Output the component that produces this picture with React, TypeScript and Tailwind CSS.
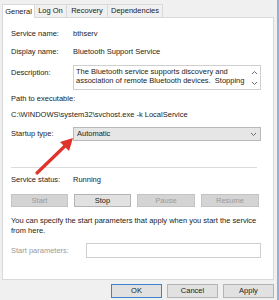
const tabs = ["General", "Log On", "Recovery", "Dependencies"];
const tabWidths = ["w-[33px]", "w-[33px]", "w-[42px]", "w-[56px]"];

const Chevron = ({ up }: { up?: boolean }) => (
  <svg width="7" height="5" viewBox="0 0 7 5" className="block">
    <path
      d={up ? "M1 4 L3.5 1.5 L6 4" : "M1 1 L3.5 3.5 L6 1"}
      fill="none"
      stroke="#6d6d6d"
      strokeWidth="1"
    />
  </svg>
);

const Button = ({
  label,
  disabled,
  primary,
  className = "",
}: {
  label: string;
  disabled?: boolean;
  primary?: boolean;
  className?: string;
}) => {
  const look = disabled
    ? "bg-[#d4d4d4] border-[#c4c4c4] text-[#9a9a9a]"
    : primary
      ? "bg-[#e1e1e1] border-[#3c84d0] text-[#1a1a1a]"
      : "bg-[#e1e1e1] border-[#b4b4b4] text-[#1a1a1a]";
  return (
    <div
      className={`flex items-center justify-center border ${look} ${className}`}
    >
      {label}
    </div>
  );
};

export default function App() {
  return (
    <div
      className="relative w-[279px] h-[300px] bg-[#f0f0f0] border-r-2 border-[#8db2dd] pl-[2px] pt-[4px] text-[7.5px] leading-[10px] text-[#1c1c1c] overflow-hidden"
      style={{ fontFamily: '"Liberation Sans", Arial, sans-serif' }}
    >
      {/* tab strip */}
      <div className="flex h-[13px] w-[271px]">
        {tabs.map((t, i) => (
          <div
            key={t}
            className={`${tabWidths[i]} flex items-center justify-center border border-b-0 ${
              i === 0
                ? "bg-white border-[#d9d9d9] relative z-10 h-[14px] -mt-[0px]"
                : "bg-[#f0f0f0] border-[#d9d9d9] -ml-px"
            }`}
          >
            {t}
          </div>
        ))}
      </div>

      {/* tab panel */}
      <div className="w-[272px] h-[263px] bg-white border border-[#d9d9d9] pl-[8px] flex flex-col">
        <div className="flex mt-[11px]">
          <div className="w-[62px]">Service name:</div>
          <div>bthserv</div>
        </div>
        <div className="flex mt-[8px]">
          <div className="w-[62px]">Display name:</div>
          <div>Bluetooth Support Service</div>
        </div>
        <div className="flex mt-[8px]">
          <div className="w-[62px] mt-[3px]">Description:</div>
          <div className="w-[188px] h-[25px] border border-[#cfcfcf] flex pl-[2px] pt-[1px]">
            <div className="flex-1 leading-[9px]">
              The Bluetooth service supports discovery and
              <br />
              association of remote Bluetooth devices.&nbsp; Stopping
            </div>
            <div className="w-[12px] flex flex-col items-center pt-[3px] gap-[6px]">
              <Chevron up />
              <Chevron />
            </div>
          </div>
        </div>
        <div className="mt-[4px]">Path to executable:</div>
        <div className="mt-[6px]">
          C:\WINDOWS\system32\svchost.exe -k LocalService
        </div>
        <div className="flex items-center mt-[7px]">
          <div className="w-[62px]">Startup type:</div>
          <div className="w-[188px] h-[14px] bg-[#e6e6e6] border border-[#b9b9b9] flex items-center pl-[3px] pr-[3px]">
            <div className="flex-1">Automatic</div>
            <Chevron />
          </div>
        </div>
        <div className="mt-[26px] h-px w-[246px] bg-[#dcdcdc]" />
        <div className="flex mt-[7px]">
          <div className="w-[62px]">Service status:</div>
          <div>Running</div>
        </div>
        <div className="flex gap-[6px] mt-[9px] h-[13px]">
          <Button label="Start" disabled className="w-[57px]" />
          <Button label="Stop" className="w-[57px]" />
          <Button label="Pause" disabled className="w-[58px]" />
          <Button label="Resume" disabled className="w-[58px]" />
        </div>
        <div className="mt-[9px]">
          You can specify the start parameters that apply when you start the service
          <br />
          from here.
        </div>
        <div className="flex items-center mt-[7px]">
          <div className="w-[75px] text-[#9a9a9a]">Start parameters:</div>
          <div className="w-[175px] h-[15px] border border-[#cfcfcf] bg-white" />
        </div>
      </div>

      {/* dialog buttons */}
      <div className="flex justify-end w-[272px] gap-[5px] mt-[4px] h-[14px]">
        <Button label="OK" primary className="w-[51px]" />
        <Button label="Cancel" className="w-[51px]" />
        <Button label="Apply" className="w-[51px]" />
      </div>

      {/* red annotation arrow */}
      <svg
        className="absolute left-0 top-0 pointer-events-none"
        width="279"
        height="300"
        viewBox="0 0 279 300"
      >
        <line
          x1="37"
          y1="173"
          x2="66"
          y2="145"
          stroke="#e0332b"
          strokeWidth="3.2"
          strokeLinecap="round"
        />
        <polygon points="73,138 69,151 60,142" fill="#e0332b" />
      </svg>
    </div>
  );
}
